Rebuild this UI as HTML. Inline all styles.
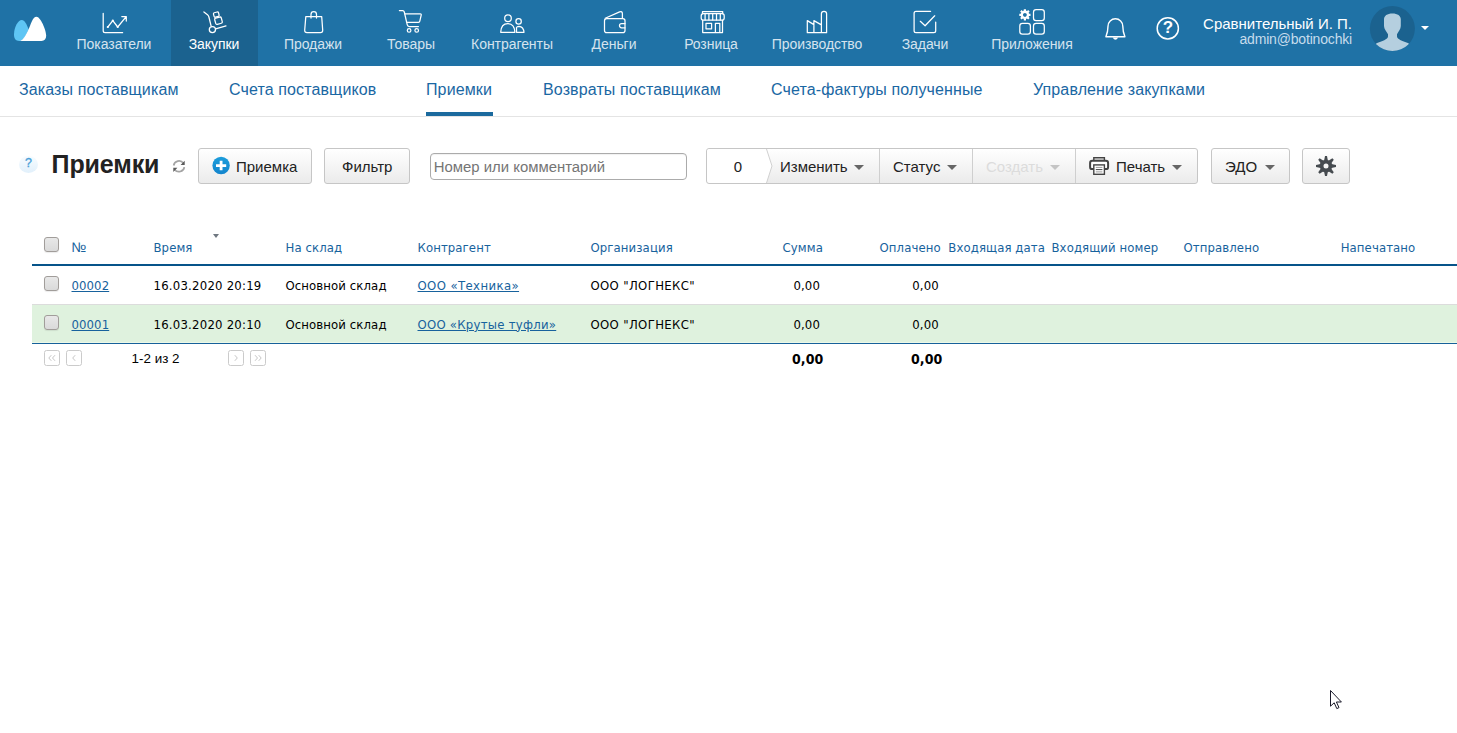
<!DOCTYPE html>
<html lang="ru">
<head>
<meta charset="utf-8">
<title>Приемки</title>
<style>
*{box-sizing:border-box;margin:0;padding:0}
html,body{width:1457px;height:733px;overflow:hidden;background:#fff}
body{position:relative;font-family:"Liberation Sans",sans-serif;color:#000}
.abs{position:absolute}
/* top nav */
#nav{position:absolute;left:0;top:0;width:1457px;height:66px;background:#1f72a6}
#nav .act{position:absolute;left:171px;top:0;width:87px;height:66px;background:#1b628f}
.ni{position:absolute;top:0;height:66px;width:120px;margin-left:-60px;text-align:center;color:#d5e3ee;font-size:14px;letter-spacing:-.06px}
.ni span{position:absolute;left:0;right:0;top:36px;line-height:16px;white-space:nowrap}
.ni svg{position:absolute;left:50%;top:8px;width:30px;height:28px;margin-left:-15px;fill:none;stroke:#fff;stroke-width:1.25;stroke-linecap:round;stroke-linejoin:round}
.ni.on{color:#fff}
.ic{fill:none;stroke:#fff;stroke-width:1.4;stroke-linejoin:round;stroke-linecap:round}
/* sub nav */
#sub{position:absolute;left:0;top:66px;width:1457px;height:51px;border-bottom:1px solid #e4e4e4}
#sub a{position:absolute;top:14px;line-height:20px;font-size:16px;letter-spacing:.12px;color:#1a67a3;white-space:nowrap;text-decoration:none}
#sub i{position:absolute;left:426px;top:46px;width:67px;height:4px;background:#1b6a9e}
/* toolbar */
.btn{position:absolute;top:148px;height:36px;border:1px solid #c6c6c6;border-radius:3px;background:linear-gradient(#ffffff,#ebebeb);font-size:15px;line-height:34px;color:#222;white-space:nowrap}
.btn span{position:absolute;top:.8px}
.dv{position:absolute;top:0;width:1px;height:34px;background:#cfcfcf}
.caret{position:absolute;top:16.4px;width:0;height:0;border-left:5px solid transparent;border-right:5px solid transparent;border-top:5px solid #666}
/* table */
#tbl{position:absolute;left:32px;top:228px;width:1425px;font-family:"DejaVu Sans Condensed","DejaVu Sans","Liberation Sans",sans-serif;font-size:13px;letter-spacing:.1px}
#tbl .t{position:absolute;white-space:nowrap;line-height:16px}
.hd{color:#17629d}
.lnk{color:#17629d;text-decoration:underline}
.cb{position:absolute;width:15px;height:15px;border:1px solid #a19d9a;border-radius:3px;background:linear-gradient(#e8e8e8,#dadada);box-shadow:0 1px 1px rgba(0,0,0,.08)}
.pg{position:absolute;width:16px;height:16px;border:1px solid #cbcbcb;border-radius:2.5px;background:#fff}
.pg svg{position:absolute;left:0;top:0}
</style>
</head>
<body>
<div id="nav">
<div class="act"></div>
<svg class="abs" style="left:0;top:0" width="60" height="66" viewBox="0 0 60 66">
<path fill="#5ec5f4" d="M14,34.5 C14,27 18,19.9 21.8,19.9 C24.6,19.9 26.5,24 28.7,29.4 C25.6,36 23.6,39.5 20.4,40.9 L19.2,40.9 C15.6,40.9 14,38.5 14,34.5 Z"/>
<path fill="#fff" d="M20.2,40.9 C23.5,39.6 25.5,36 28.5,29.6 C30.6,25 32.6,16.7 36.5,16.7 C40.5,16.7 46.2,30 46.2,35.6 C46.2,39 44.5,40.9 41.5,40.9 Z"/>
</svg>
<div class="ni" style="left:114px"><svg viewBox="99 8 30 28"><path d="M103.2,13.3 V30.8 Q103.2,32.7 105.1,32.7 H122.6"/><path d="M107.8,27 L112.8,20.6 L117.7,27 L126,16.9 M121.8,16.6 L126.3,16.6 L126.3,21"/><g fill="#fff" stroke="none"><circle cx="107.8" cy="27" r="1.1"/><circle cx="112.8" cy="20.7" r="1.1"/><circle cx="117.7" cy="27" r="1.1"/></g></svg><span>Показатели</span></div>
<div class="ni on" style="left:214px"><svg viewBox="199 8 30 28"><path d="M203.9,11.9 L207.5,14.8 Q208.6,15.7 208.9,17 L211.2,26.4"/><circle cx="212.4" cy="29.6" r="3.1"/><path d="M215.6,28.9 L226,25.9"/><rect x="-2.6" y="-2.3" width="5.2" height="4.6" rx="1.1" transform="translate(216.3 14.6) rotate(-15)"/><rect x="-3.4" y="-3.2" width="6.8" height="6.4" rx="1.3" transform="translate(218.5 20.7) rotate(-15)"/></svg><span>Закупки</span></div>
<div class="ni" style="left:313px"><svg viewBox="298 8 30 28"><path d="M305.8,16.6 H321.7 L322.7,30.2 Q322.8,32.6 320.4,32.6 H307 Q304.6,32.6 304.7,30.2 Z"/><path d="M311,18 V14.4 Q311,11.6 313.75,11.6 Q316.5,11.6 316.5,14.4 V18"/></svg><span>Продажи</span></div>
<div class="ni" style="left:411px"><svg viewBox="396 8 30 28"><path d="M399.4,10.6 H402.7 Q403.9,10.6 404.3,12 L407.2,24.6 Q407.6,26.5 409.2,26.5 H418.4"/><path d="M404.9,13.8 H420.2 Q421.5,13.8 421.2,15.1 L419.8,21.2 Q419.6,22.3 418.4,22.3 H406.9"/><circle cx="409.1" cy="30.4" r="1.8"/><circle cx="416.7" cy="30.4" r="1.8"/></svg><span>Товары</span></div>
<div class="ni" style="left:512px"><svg viewBox="497 8 30 28"><circle cx="508" cy="18.3" r="3.3"/><path d="M500.7,32.3 Q501.1,23.6 507.8,23.6 Q514.5,23.6 514.9,32.3 Z"/><circle cx="518.6" cy="21.4" r="2.7"/><path d="M516.5,32.3 V27.6 Q516.9,26.3 518.9,26.3 Q523.6,26.7 524,32.3 Z"/></svg><span>Контрагенты</span></div>
<div class="ni" style="left:614px"><svg viewBox="599 8 30 28"><rect x="604.5" y="18.6" width="20.5" height="14" rx="2.2"/><path d="M605.2,18.2 L619.6,11.9 Q622.4,10.9 622.4,13.8 V18.4"/><path d="M625,23.5 H621.6 Q619.5,23.5 619.5,25.6 Q619.5,27.8 621.6,27.8 H625"/></svg><span>Деньги</span></div>
<div class="ni" style="left:711px"><svg viewBox="696 8 30 28"><path d="M702.5,13.5 V11.5 H722.7 V13.5"/><rect x="701.2" y="13.6" width="23" height="6.5" rx="2.2"/><path d="M705.1,13.9 V19.9 M708.9,13.9 V19.9 M712.7,13.9 V19.9 M716.5,13.9 V19.9 M720.3,13.9 V19.9"/><path d="M702.7,20.3 V32.6 H722.5 V20.3 M706,23.3 H711.6 V28.8 H706 Z M715.4,32.6 V23.3 H719.8 V32.6"/></svg><span>Розница</span></div>
<div class="ni" style="left:817px"><svg viewBox="802 8 30 28"><path d="M807.3,32.7 V20.6 L813.9,24.6 V20.6 L821.4,24.9 V13.8 Q821.4,11.3 824,11.3 Q826.6,11.3 826.6,13.8 V32.7 Z M813.9,24.6 V32.4 M821.4,24.9 V32.4"/></svg><span>Производство</span></div>
<div class="ni" style="left:925px"><svg viewBox="910 8 30 28"><path d="M930.6,11.3 H916 Q914.1,11.3 914.1,13.2 V30.8 Q914.1,32.7 916,32.7 H933.8 Q935.7,32.7 935.7,30.8 V22"/><path d="M920.3,21.3 L925.1,25.8 L934.7,15.8"/></svg><span>Задачи</span></div>
<div class="ni" style="left:1032px"><svg viewBox="1017 8 30 28"><rect x="1033.5" y="9.7" width="10.8" height="10.8" rx="2.6"/><rect x="1019.8" y="23.4" width="10.6" height="10.6" rx="2.6"/><rect x="1033.5" y="23.4" width="10.8" height="10.6" rx="2.6"/><g transform="translate(1024.9 14.8)"><circle r="3.1" stroke-width="2.4"/><path stroke-width="2.2" stroke-linecap="butt" d="M0,-5.6 V-3.6 M0,5.6 V3.6 M-5.6,0 H-3.6 M5.6,0 H3.6 M-4,-4 L-2.6,-2.6 M4,4 L2.6,2.6 M-4,4 L-2.6,2.6 M4,-4 L2.6,-2.6"/></g></svg><span>Приложения</span></div>
<svg class="abs ic" style="left:1100px;top:12px" width="32" height="32" viewBox="1100 12 32 32"><path d="M1105.9,36.8 C1107.4,33 1108,30 1108,26.2 A7.4,7.4 0 0 1 1122.8,26.2 C1122.8,30 1123.4,33 1124.9,36.8 Z"/><path d="M1112.6,37.4 Q1115.4,42.2 1118.2,37.4 Z" fill="#fff" stroke="none"/></svg>
<svg class="abs ic" style="left:1154px;top:15px" width="28" height="28" viewBox="1154 15 28 28"><circle cx="1167.8" cy="28.4" r="10.6" stroke-width="1.5"/></svg>
<div class="abs" style="left:1158px;top:18px;width:20px;text-align:center;font-size:17px;font-weight:bold;color:#fff;line-height:20px">?</div>
<div class="abs" style="right:105px;top:15px;font-size:15px;line-height:18px;color:#fff;white-space:nowrap">Сравнительный И. П.</div>
<div class="abs" style="right:105px;top:30.7px;font-size:14px;letter-spacing:-.18px;line-height:17px;color:#c6dcec;white-space:nowrap">admin@botinochki</div>
<svg class="abs" style="left:1368px;top:4px" width="50" height="50" viewBox="1368 4 50 50"><defs><clipPath id="av"><circle cx="1392.4" cy="28.55" r="22.5"/></clipPath></defs><circle cx="1392.4" cy="28.55" r="22.5" fill="#1b628f"/><g clip-path="url(#av)" fill="#b5cfdf"><path d="M1392.4,13.4 C1397.6,13.4 1400.8,15.6 1400.8,19.2 L1400.8,26 C1400.8,29.2 1398.4,31.6 1397,34.2 L1397,36.4 C1397,39.2 1403,41 1408.6,43.2 L1414,56 L1371,56 L1376.4,43.2 C1382,41 1388,39.2 1388,36.4 L1388,34.2 C1386.6,31.6 1384,29.2 1384,26 L1384,19.2 C1384,15.6 1387.2,13.4 1392.4,13.4 Z"/></g></svg>
<div class="abs" style="left:1421px;top:26px;width:0;height:0;border-left:4px solid transparent;border-right:4px solid transparent;border-top:4px solid #fff"></div>
</div>
<div id="sub">
<a style="left:19px">Заказы поставщикам</a>
<a style="left:229px">Счета поставщиков</a>
<a style="left:426px">Приемки</a>
<a style="left:543px">Возвраты поставщикам</a>
<a style="left:771px">Счета-фактуры полученные</a>
<a style="left:1033px">Управление закупками</a>
<i></i>
</div>
<div id="tool">
<div class="abs" style="left:19px;top:155.5px;width:19px;height:17px;border-radius:50%;background:linear-gradient(#f8fcff,#e1f0fb);text-align:center;font-size:12.5px;font-weight:normal;line-height:14px;color:#4a9fd8;-webkit-text-stroke:.3px #4a9fd8">?</div>
<div class="abs" style="left:51.6px;top:149.4px;font-size:25px;letter-spacing:-.12px;font-weight:bold;line-height:30px;color:#222;white-space:nowrap">Приемки</div>
<svg class="abs" style="left:171px;top:158px" width="16" height="16" viewBox="171 158 16 16" fill="none" stroke="#a4a4a4" stroke-width="1.7"><path d="M173.65,165.5 A5.4,5.4 0 0 1 183.4,163.2"/><path d="M184.35,167.1 A5.4,5.4 0 0 1 174.6,169.4"/><path fill="#5a5a5a" stroke="none" d="M184.7,160.7 V164.9 H180.6 Z M173.3,171.9 V167.7 H177.4 Z"/></svg>
<div class="btn" style="left:198px;width:114px"><svg class="abs" style="left:12px;top:7px" width="20" height="20" viewBox="0 0 20 20"><defs><linearGradient id="pg" x1="0" y1="0" x2="0" y2="1"><stop offset="0" stop-color="#1c9ddb"/><stop offset="1" stop-color="#1485cd"/></linearGradient></defs><circle cx="10.1" cy="9.5" r="8.7" fill="url(#pg)"/><path d="M10.1,4.8 V14.3 M5,9.7 H15.2" stroke="#fff" stroke-width="2.8" fill="none"/></svg><span style="left:37px">Приемка</span></div>
<div class="btn" style="left:324px;width:86px"><span style="left:17px">Фильтр</span></div>
<div class="abs" style="left:430px;top:153px;width:257px;height:27px;border:1px solid #ababab;border-radius:4px;background:#fff;box-shadow:inset 0 1px 1px rgba(0,0,0,.06);font-size:14.9px;line-height:26px;color:#757575;padding-left:2.8px;white-space:nowrap">Номер или комментарий</div>
<div class="btn" style="left:706px;width:492px">
<svg class="abs" style="left:0;top:0" width="70" height="34" viewBox="0 0 70 34"><path d="M0,3 Q0,0 3,0 H59.5 L65,17 L59.5,34 H3 Q0,34 0,31 Z" fill="#fff"/><path d="M59.5,0 L65,17 L59.5,34" fill="none" stroke="#d0d0d0" stroke-width="1"/></svg>
<span style="left:25px;width:12px;text-align:center">0</span>
<span style="left:73px">Изменить</span><i class="caret" style="left:147px"></i>
<b class="dv" style="left:172px"></b>
<span style="left:186px">Статус</span><i class="caret" style="left:240px"></i>
<b class="dv" style="left:265px"></b>
<span style="left:279px;color:#dcdcdc">Создать</span><i class="caret" style="left:343px;border-top-color:#c4c4c4"></i>
<b class="dv" style="left:368px"></b>
<svg class="abs" style="left:381px;top:7px" width="22" height="20" viewBox="1088 156 22 20"><rect x="1093.8" y="157.7" width="10.6" height="4" fill="#dedede" stroke="#444" stroke-width="1.4"/><rect x="1090.1" y="160.7" width="18" height="8.4" rx="2.2" fill="#fff" stroke="#444" stroke-width="2"/><rect x="1093.8" y="164.9" width="10.6" height="9.4" fill="#fff" stroke="#444" stroke-width="1.4"/><path d="M1095.8,167.4 H1102.4 M1095.8,171.9 H1102.4" stroke="#9a9a9a" stroke-width="1"/><path d="M1095.8,169.6 H1102.4" stroke="#444" stroke-width="1"/></svg>
<span style="left:409px">Печать</span><i class="caret" style="left:465px"></i>
</div>
<div class="btn" style="left:1211px;width:79px"><span style="left:13px">ЭДО</span><i class="caret" style="left:53px"></i></div>
<div class="btn" style="left:1302px;width:48px"><svg class="abs" style="left:12px;top:6px" width="22" height="22" viewBox="-11 -11 22 22"><g fill="#464b50"><path d="M-1.9,-5.4 L-1,-10 H1 L1.9,-5.4 Z" transform="rotate(0)"/><path d="M-1.9,-5.4 L-1,-10 H1 L1.9,-5.4 Z" transform="rotate(45)"/><path d="M-1.9,-5.4 L-1,-10 H1 L1.9,-5.4 Z" transform="rotate(90)"/><path d="M-1.9,-5.4 L-1,-10 H1 L1.9,-5.4 Z" transform="rotate(135)"/><path d="M-1.9,-5.4 L-1,-10 H1 L1.9,-5.4 Z" transform="rotate(180)"/><path d="M-1.9,-5.4 L-1,-10 H1 L1.9,-5.4 Z" transform="rotate(225)"/><path d="M-1.9,-5.4 L-1,-10 H1 L1.9,-5.4 Z" transform="rotate(270)"/><path d="M-1.9,-5.4 L-1,-10 H1 L1.9,-5.4 Z" transform="rotate(315)"/><path fill-rule="evenodd" d="M0,-6.3 A6.3,6.3 0 1 0 0,6.3 A6.3,6.3 0 1 0 0,-6.3 Z M0,-2.5 A2.5,2.5 0 1 1 0,2.5 A2.5,2.5 0 1 1 0,-2.5 Z"/></g></svg></div>
</div>
<div id="tbl">
<div class="abs" style="left:0;top:76px;width:1425px;height:39px;background:#dff2de;border-top:1px solid #dcdcdc;border-bottom:1px solid #ecf9e8"></div>
<div class="abs" style="left:0;top:36px;width:1425px;height:2px;background:#06548a"></div>
<div class="abs" style="left:0;top:115px;width:1425px;height:1px;background:#16619a"></div>
<i class="cb" style="left:12px;top:9px"></i>
<i class="cb" style="left:12px;top:48px"></i>
<i class="cb" style="left:12px;top:87px"></i>
<div class="abs" style="left:181px;top:6px;width:0;height:0;border-left:3.5px solid transparent;border-right:3.5px solid transparent;border-top:4px solid #6f7780"></div>
<span class="t hd" style="left:39.6px;top:10.5px;font-family:'Liberation Sans',sans-serif;font-size:14px;letter-spacing:0">№</span>
<span class="t hd" style="left:121.5px;top:11.5px;">Время</span>
<span class="t hd" style="left:253.5px;top:11.5px;">На склад</span>
<span class="t hd" style="left:385.5px;top:11.5px;">Контрагент</span>
<span class="t hd" style="left:558.5px;top:11.5px;">Организация</span>
<span class="t hd" style="left:750.5px;top:11.5px;">Сумма</span>
<span class="t hd" style="left:847.5px;top:11.5px;">Оплачено</span>
<span class="t hd" style="left:916.3px;top:11.5px;">Входящая дата</span>
<span class="t hd" style="left:1019.5px;top:11.5px;">Входящий номер</span>
<span class="t hd" style="left:1151.5px;top:11.5px;">Отправлено</span>
<span class="t hd" style="left:1308.7px;top:11.5px;">Напечатано</span>
<span class="t lnk" style="left:39.5px;top:49.5px;">00002</span>
<span class="t " style="left:121.5px;top:49.5px;letter-spacing:.23px">16.03.2020 20:19</span>
<span class="t " style="left:253.5px;top:49.5px;">Основной склад</span>
<span class="t lnk" style="left:385.5px;top:49.5px;letter-spacing:.4px">ООО «Техника»</span>
<span class="t " style="left:558.5px;top:49.5px;letter-spacing:.35px">ООО &quot;ЛОГНЕКС&quot;</span>
<span class="t " style="left:761.5px;top:49.5px;">0,00</span>
<span class="t " style="left:880.3px;top:49.5px;">0,00</span>
<span class="t lnk" style="left:39.5px;top:88.7px;">00001</span>
<span class="t " style="left:121.5px;top:88.7px;letter-spacing:.23px">16.03.2020 20:10</span>
<span class="t " style="left:253.5px;top:88.7px;">Основной склад</span>
<span class="t lnk" style="left:385.5px;top:88.7px;letter-spacing:.26px">ООО «Крутые туфли»</span>
<span class="t " style="left:558.5px;top:88.7px;letter-spacing:.35px">ООО &quot;ЛОГНЕКС&quot;</span>
<span class="t " style="left:761.5px;top:88.7px;">0,00</span>
<span class="t " style="left:880.3px;top:88.7px;">0,00</span>
<span class="t " style="left:760px;top:123px;font-weight:bold;font-size:14px;line-height:17px">0,00</span>
<span class="t " style="left:879px;top:123px;font-weight:bold;font-size:14px;line-height:17px">0,00</span>
<i class="pg" style="left:12px;top:122px"><svg width="14" height="14" viewBox="0 0 14 14" fill="none" stroke="#c6c6c6" stroke-width="1"><path d="M6.3,4.2 L3.8,7 L6.3,9.8 M10,4.2 L7.5,7 L10,9.8"/></svg></i>
<i class="pg" style="left:34px;top:122px"><svg width="14" height="14" viewBox="0 0 14 14" fill="none" stroke="#c6c6c6" stroke-width="1"><path d="M8.2,4.2 L5.7,7 L8.2,9.8"/></svg></i>
<i class="pg" style="left:196px;top:122px"><svg width="14" height="14" viewBox="0 0 14 14" fill="none" stroke="#c6c6c6" stroke-width="1"><path d="M5.8,4.2 L8.3,7 L5.8,9.8"/></svg></i>
<i class="pg" style="left:218px;top:122px"><svg width="14" height="14" viewBox="0 0 14 14" fill="none" stroke="#c6c6c6" stroke-width="1"><path d="M4,4.2 L6.5,7 L4,9.8 M7.7,4.2 L10.2,7 L7.7,9.8"/></svg></i>
<span class="t " style="left:99.6px;top:123.4px;font-family:'Liberation Sans',sans-serif;font-size:13.4px;letter-spacing:0">1-2 из 2</span>
</div>
<svg class="abs" style="left:1329px;top:689px" width="14" height="21" viewBox="0 0 14 21"><path d="M1.5,1.5 V17.2 L5.2,13.8 L7.8,19.6 L10,18.6 L7.4,13 H12.4 Z" fill="#fff" stroke="#1a1a2a" stroke-width="1" stroke-linejoin="miter"/></svg>
</body>
</html>
